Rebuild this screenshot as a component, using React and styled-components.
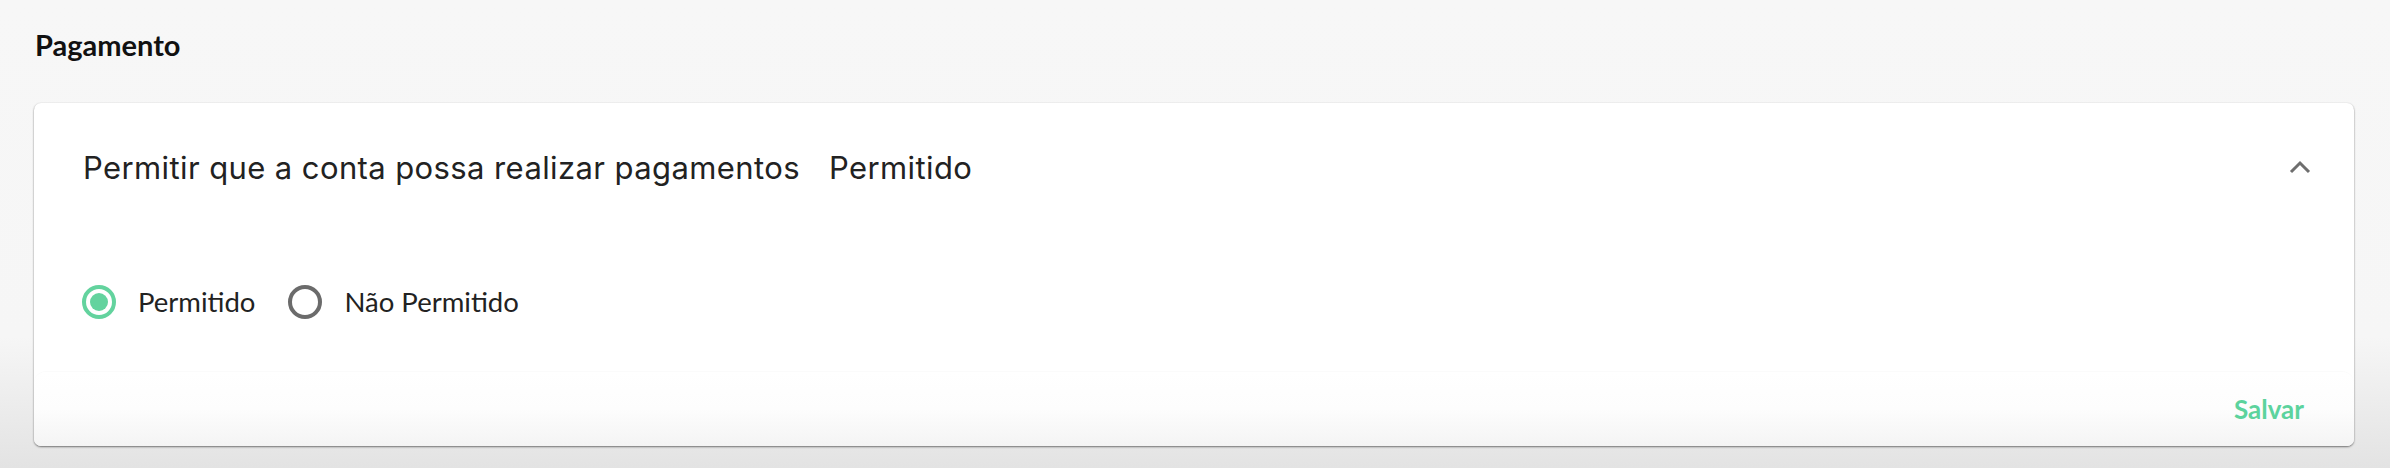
import React, { useState } from 'react'
import styled, { createGlobalStyle } from 'styled-components'

const GlobalStyle = createGlobalStyle`
    html, body {
        margin: 0;
        padding: 0;
    }
    body {
        min-height: 468px;
        background: linear-gradient(180deg, #f7f7f7 0%, #f6f6f6 72%, #e3e3e3 100%);
        font-family: "Lato", "Noto Sans", sans-serif;
    }
`

const Page = styled.div`
    padding: 28px 36px 22px 34px;
    box-sizing: border-box;
    height: 468px;
`

const Title = styled.h2`
    margin: 0 0 0 1px;
    font-family: "Lato", sans-serif;
    font-size: 29px;
    font-weight: 700;
    line-height: 34px;
    color: #111;
`

const Card = styled.section`
    margin-top: 41px;
    background: #fff;
    border-radius: 7px;
    box-shadow: 0 1px 2px rgba(0, 0, 0, 0.5), 0 0 2px rgba(0, 0, 0, 0.06);
`

const Header = styled.div`
    display: flex;
    align-items: center;
    height: 128px;
    padding: 0 43px 0 49px;
    font-family: "Inter", sans-serif;
    font-size: 31px;
    letter-spacing: 0.4px;
    color: #222;

    .value {
        margin-left: 29px;
    }
`

const Toggle = styled.button`
    margin-left: auto;
    background: none;
    border: none;
    padding: 0;
    cursor: pointer;
    display: flex;
`

const Body = styled.div`
    display: flex;
    align-items: center;
    gap: 33px;
    height: 141px;
    padding: 0 48px;
`

const Option = styled.label`
    display: flex;
    align-items: center;
    gap: 22px;
    cursor: pointer;
    font-family: "Lato", sans-serif;
    font-size: 27.5px;
    color: #222;
`

const Radio = styled.span`
    box-sizing: border-box;
    width: 34px;
    height: 34px;
    border-radius: 50%;
    border: 4px solid ${p => (p.checked ? '#63d39e' : '#6b6b6b')};
    display: flex;
    align-items: center;
    justify-content: center;

    &::after {
        content: '';
        width: 18px;
        height: 18px;
        border-radius: 50%;
        background: ${p => (p.checked ? '#63d39e' : 'transparent')};
    }
`

const Footer = styled.div`
    display: flex;
    justify-content: flex-end;
    align-items: center;
    height: 74px;
    padding: 0 50px;
    border-radius: 12px 12px 7px 7px;
    background: linear-gradient(180deg, #ffffff 0%, #fdfdfd 50%, #f4f4f4 100%);
    box-shadow: 0 -1px 1px rgba(0, 0, 0, 0.02);
`

const SaveButton = styled.button`
    background: none;
    border: none;
    padding: 0;
    cursor: pointer;
    font-family: "Lato", sans-serif;
    font-size: 26px;
    font-weight: 700;
    color: #5cd39d;
`

const options = ['Permitido', 'Não Permitido']

const App = () => {
    const [value, setValue] = useState('Permitido')

    return (
        <>
            <GlobalStyle />
            <Page>
                <Title>Pagamento</Title>
                <Card>
                    <Header>
                        <span>Permitir que a conta possa realizar pagamentos</span>
                        <span className="value">{value}</span>
                        <Toggle aria-label="Recolher">
                            <svg width="22" height="14" viewBox="0 0 22 14">
                                <polyline points="2,12 11,3 20,12" fill="none" stroke="#6e6e6e" strokeWidth="3" />
                            </svg>
                        </Toggle>
                    </Header>
                    <Body>
                        {options.map(opt => (
                            <Option key={opt} onClick={() => setValue(opt)}>
                                <Radio checked={value === opt} />
                                {opt}
                            </Option>
                        ))}
                    </Body>
                    <Footer>
                        <SaveButton>Salvar</SaveButton>
                    </Footer>
                </Card>
            </Page>
        </>
    )
}

export default App
